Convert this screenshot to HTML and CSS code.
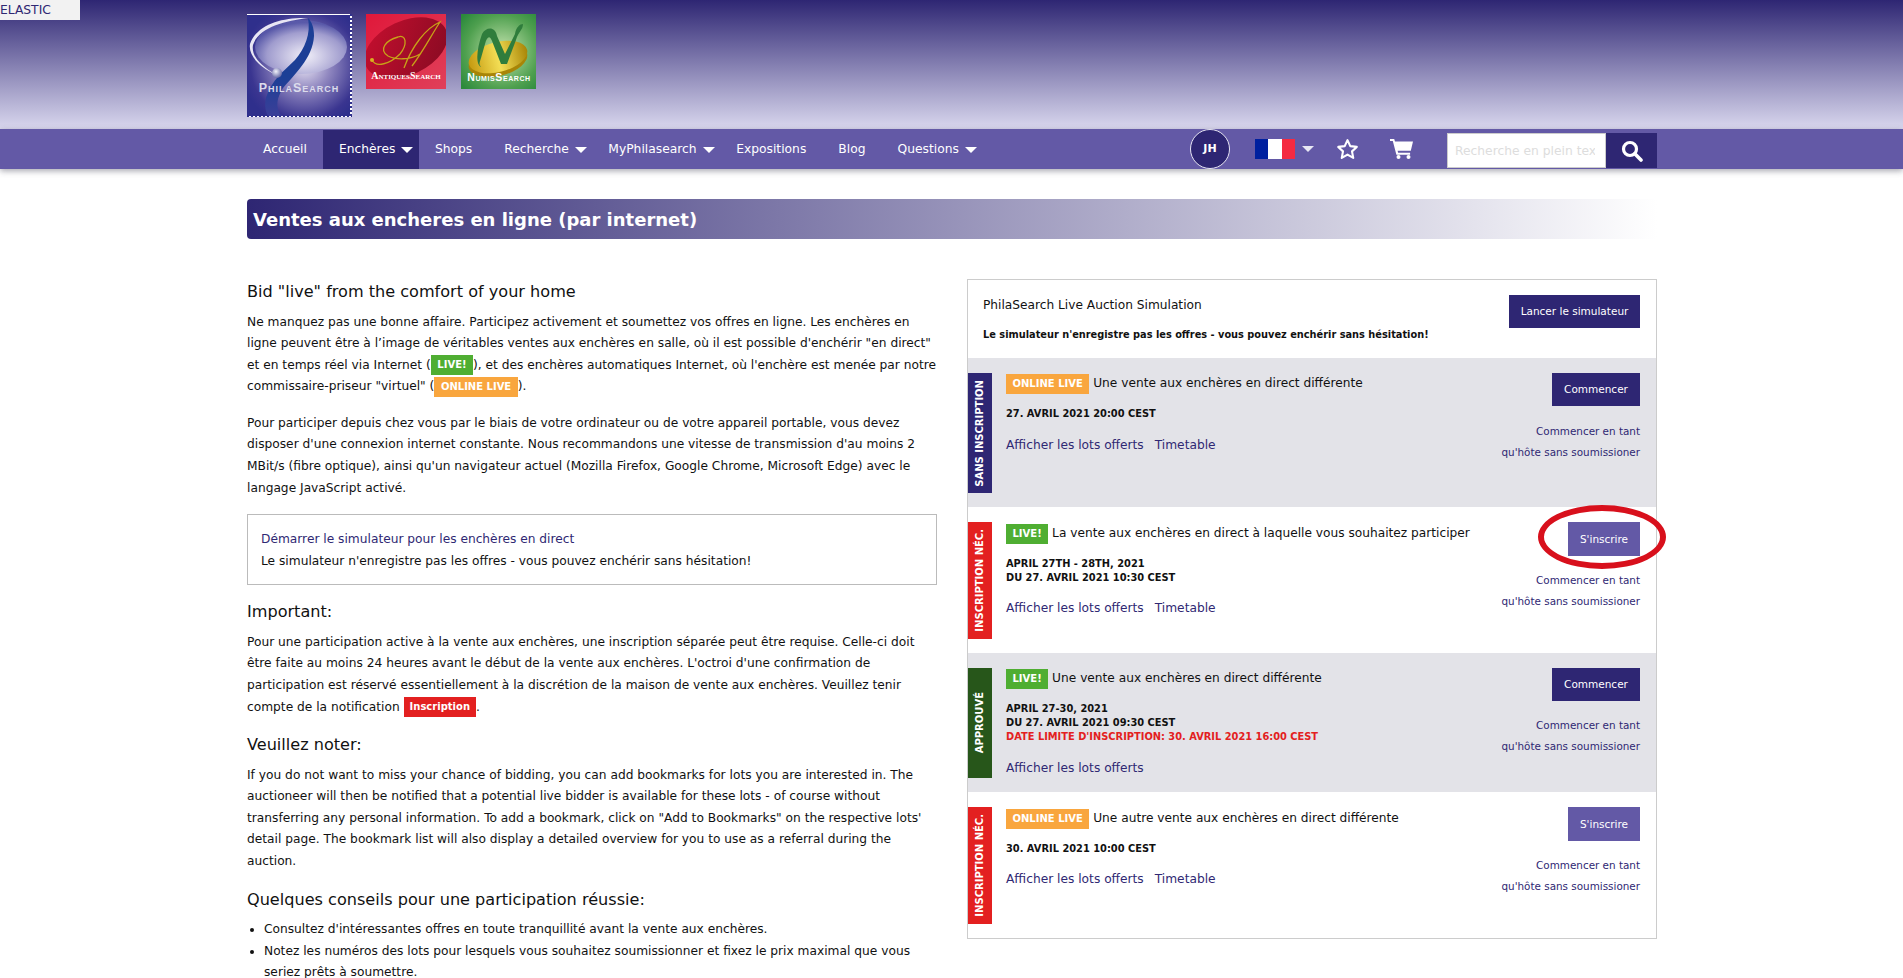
FILE: index.html
```html
<!DOCTYPE html>
<html lang="fr">
<head>
<meta charset="utf-8">
<title>Ventes aux encheres en ligne</title>
<link rel="stylesheet" href="styles.css">
</head>
<body>
<a class="elastic" href="#">ELASTIC</a>
<header class="masthead">
  <div class="wrap logos">
    <svg class="logo logo-phila" width="105" height="103" viewBox="0 0 105 103" role="img" aria-label="PhilaSearch">
      <defs>
        <radialGradient id="pg" cx="0.56" cy="0.5" r="0.62"><stop offset="0" stop-color="#e6e2f2"/><stop offset="0.4" stop-color="#8f86bf"/><stop offset="0.85" stop-color="#3a3590"/><stop offset="1" stop-color="#2f2f8c"/></radialGradient>
        <radialGradient id="lobe" cx="0.55" cy="0.65" r="0.6"><stop offset="0" stop-color="#f7f6fc"/><stop offset="0.7" stop-color="#a9a6d4"/><stop offset="1" stop-color="#5a5bab"/></radialGradient>
        <radialGradient id="ball" cx="0.4" cy="0.35" r="0.7"><stop offset="0" stop-color="#f2f2fa"/><stop offset="1" stop-color="#5a5d9e"/></radialGradient>
        <linearGradient id="rib" x1="0" y1="0" x2="0" y2="1"><stop offset="0" stop-color="#1c3f96"/><stop offset="0.6" stop-color="#1c3f96"/><stop offset="1" stop-color="#3b3f98"/></linearGradient>
      </defs>
      <rect width="105" height="103" fill="#fff"/>
      <rect x="0" y="1" width="103" height="101" fill="url(#pg)"/>
      <ellipse cx="54" cy="33" rx="46" ry="27" fill="url(#lobe)" opacity=".85"/>
      <path d="M61 4C36 3 10 10 3 30 1 42 14 54 28 60 14 52 4 42 6 31 12 13 38 7 61 4Z" fill="#e8e6f4"/>
      <path d="M61 4C64 20 58 34 48 46 38 56 24 66 19 84 17 92 19 98 21 102L34 102C28 92 30 84 36 74 46 62 66 44 67 22 67 14 65 8 61 4Z" fill="url(#rib)"/>
      <circle cx="30" cy="59" r="5" fill="url(#ball)"/>
      <text x="52" y="78" class="logo-text logo-text-phila" text-anchor="middle">PhilaSearch</text>
      <path d="M104 0V103" stroke="#2f2f8c" stroke-width="2" stroke-dasharray="2 2"/>
      <path d="M0 102.500H105" stroke="#2f2f8c" stroke-width="1.500" stroke-dasharray="2 2"/>
    </svg>
    <svg class="logo logo-antiques" width="80" height="75" viewBox="0 0 80 75" role="img" aria-label="AntiquesSearch">
      <defs>
        <linearGradient id="ag" x1="0" y1="0" x2="1" y2="1"><stop offset="0" stop-color="#e0183a"/><stop offset="1" stop-color="#e0405a"/></linearGradient>
        <linearGradient id="ae" x1="0" y1="0" x2="1" y2="0.600"><stop offset="0" stop-color="#c80f2f"/><stop offset="1" stop-color="#8f0b24"/></linearGradient>
      </defs>
      <rect width="80" height="75" fill="url(#ag)"/>
      <ellipse cx="40" cy="34" rx="44" ry="27" transform="rotate(-25 40 34)" fill="url(#ae)"/>
      <path d="M6 46C10 54 24 50 34 40 42 30 40 20 32 23 20 26 12 36 22 42 30 46 44 46 54 40M38 54C46 32 60 14 74 8 66 20 58 36 46 52" fill="none" stroke="#c8a118" stroke-width="1.300"/>
      <circle cx="6" cy="46" r="2" fill="#d9b020"/>
      <text x="40" y="65" class="logo-text logo-text-antiques" text-anchor="middle">AntiquesSearch</text>
    </svg>
    <svg class="logo logo-numis" width="75" height="75" viewBox="0 0 75 75" role="img" aria-label="NumisSearch">
      <defs>
        <radialGradient id="ng" cx="0.55" cy="0.5" r="0.7"><stop offset="0" stop-color="#c6e4b0"/><stop offset="0.7" stop-color="#4fa04f"/><stop offset="1" stop-color="#2c8a3c"/></radialGradient>
        <linearGradient id="gold" x1="0" y1="0" x2="1" y2="0"><stop offset="0" stop-color="#c59a10"/><stop offset="0.5" stop-color="#f3de55"/><stop offset="1" stop-color="#a88507"/></linearGradient>
      </defs>
      <rect width="75" height="75" fill="url(#ng)"/>
      <ellipse cx="37" cy="47" rx="30" ry="15" transform="rotate(-14 37 47)" fill="#a88507"/>
      <ellipse cx="37" cy="43" rx="30" ry="15" transform="rotate(-14 37 43)" fill="url(#gold)"/>
      <path d="M21 20C25 13 34 12 36 22L44 40 54 20C55 13 59 10 62 10 62 16 57 18 55 26L46 50 40 50 31 27C29 21 26 22 24 30L20 44C18 50 18 50 20 53 14 50 16 34 21 20Z" fill="#2f7d3c"/>
      <text x="38" y="67" class="logo-text logo-text-numis" text-anchor="middle">NumisSearch</text>
    </svg>
  </div>
</header>

<nav class="navbar">
  <div class="wrap nav-inner">
    <ul class="menu">
      <li><a href="#">Accueil</a></li>
      <li class="active caret"><a href="#">Enchères</a></li>
      <li><a href="#">Shops</a></li>
      <li class="caret"><a href="#">Recherche</a></li>
      <li class="caret"><a href="#">MyPhilasearch</a></li>
      <li><a href="#">Expositions</a></li>
      <li><a href="#">Blog</a></li>
      <li class="caret"><a href="#">Questions</a></li>
    </ul>
    <div class="nav-tools">
      <span class="avatar">JH</span>
      <span class="flag"><i class="fl-b"></i><i class="fl-w"></i><i class="fl-r"></i></span>
      <span class="flag-caret"></span>
      <svg class="tool-star" width="23" height="22" viewBox="0 0 24 23" aria-label="Favoris"><path d="M12 2.200l2.900 6.300 6.800.8-5 4.700 1.300 6.800-6-3.400-6 3.400 1.300-6.800-5-4.700 6.800-.8z" fill="none" stroke="#fff" stroke-width="2.200" stroke-linejoin="round"/></svg>
      <svg class="tool-cart" width="23" height="20" viewBox="0 0 23 20" aria-label="Panier"><path d="M0 0h4.200l.8 2.600H23l-2.200 9.200H7.600l.5 2h12v2H6.400L2.800 2H0z" fill="#fff"/><circle cx="8.500" cy="18" r="2" fill="#fff"/><circle cx="18.500" cy="18" r="2" fill="#fff"/></svg>
      <form class="search">
        <input class="search-input" type="text" placeholder="Recherche en plein texte">
        <button class="search-btn" type="button" aria-label="Rechercher"><svg width="22" height="22" viewBox="0 0 22 22"><circle cx="9" cy="9" r="6.500" fill="none" stroke="#fff" stroke-width="3.200"/><path d="M13.800 13.800L20 20" stroke="#fff" stroke-width="3.600" stroke-linecap="round"/></svg></button>
      </form>
    </div>
  </div>
</nav>

<main class="wrap page">
  <h1 class="page-title">Ventes aux encheres en ligne (par internet)</h1>
  <div class="columns">
    <section class="col-left">
      <h2>Bid "live" from the comfort of your home</h2>
      <p>Ne manquez pas une bonne affaire. Participez activement et soumettez vos offres en ligne. Les enchères en ligne peuvent être à l’image de véritables ventes aux enchères en salle, où il est possible d'enchérir "en direct" et en temps réel via Internet (<span class="badge live">LIVE!</span>), et des enchères automatiques Internet, où l'enchère est menée par notre commissaire-priseur "virtuel" (<span class="badge online">ONLINE LIVE</span>).</p>
      <p>Pour participer depuis chez vous par le biais de votre ordinateur ou de votre appareil portable, vous devez disposer d'une connexion internet constante. Nous recommandons une vitesse de transmission d'au moins 2 MBit/s (fibre optique), ainsi qu'un navigateur actuel (Mozilla Firefox, Google Chrome, Microsoft Edge) avec le langage JavaScript activé.</p>
      <div class="sim-box"><a href="#">Démarrer le simulateur pour les enchères en direct</a><br>Le simulateur n'enregistre pas les offres - vous pouvez enchérir sans hésitation!</div>
      <h2>Important:</h2>
      <p>Pour une participation active à la vente aux enchères, une inscription séparée peut être requise. Celle-ci doit être faite au moins 24 heures avant le début de la vente aux enchères. L'octroi d'une confirmation de participation est réservé essentiellement à la discrétion de la maison de vente aux enchères. Veuillez tenir compte de la notification <span class="badge reg">Inscription</span>.</p>
      <h2>Veuillez noter:</h2>
      <p>If you do not want to miss your chance of bidding, you can add bookmarks for lots you are interested in. The auctioneer will then be notified that a potential live bidder is available for these lots - of course without transferring any personal information. To add a bookmark, click on "Add to Bookmarks" on the respective lots' detail page. The bookmark list will also display a detailed overview for you to use as a referral during the auction.</p>
      <h2>Quelques conseils pour une participation réussie:</h2>
      <ul class="tips">
        <li>Consultez d'intéressantes offres en toute tranquillité avant la vente aux enchères.</li>
        <li>Notez les numéros des lots pour lesquels vous souhaitez soumissionner et fixez le prix maximal que vous seriez prêts à soumettre.</li>
      </ul>
    </section>

    <aside class="panel">
      <div class="panel-head">
        <div class="panel-head-text">
          <div class="panel-title">PhilaSearch Live Auction Simulation</div>
          <div class="panel-note">Le simulateur n'enregistre pas les offres - vous pouvez enchérir sans hésitation!</div>
        </div>
        <a class="btn btn-dark" href="#">Lancer le simulateur</a>
      </div>

      <article class="row row-grey row-a">
        <div class="tag tag-navy"><span>SANS INSCRIPTION</span></div>
        <div class="row-main">
          <div class="row-title"><span class="badge online">ONLINE LIVE</span> Une vente aux enchères en direct différente</div>
          <div class="row-date">27. AVRIL 2021 20:00 CEST</div>
          <div class="row-links"><a href="#">Afficher les lots offerts</a><a href="#">Timetable</a></div>
        </div>
        <div class="row-side">
          <a class="btn btn-dark btn-start" href="#">Commencer</a>
          <a class="guest" href="#">Commencer en tant<br>qu'hôte sans soumissioner</a>
        </div>
      </article>

      <article class="row row-b">
        <div class="tag tag-red"><span>INSCRIPTION NÉC.</span></div>
        <div class="row-main">
          <div class="row-title"><span class="badge live">LIVE!</span> La vente aux enchères en direct à laquelle vous souhaitez participer</div>
          <div class="row-date">APRIL 27TH - 28TH, 2021<br>DU 27. AVRIL 2021 10:30 CEST</div>
          <div class="row-links"><a href="#">Afficher les lots offerts</a><a href="#">Timetable</a></div>
        </div>
        <div class="row-side">
          <a class="btn btn-violet" href="#">S'inscrire</a>
          <a class="guest" href="#">Commencer en tant<br>qu'hôte sans soumissioner</a>
          <span class="circle-mark"></span>
        </div>
      </article>

      <article class="row row-grey row-c">
        <div class="tag tag-green"><span>APPROUVÉ</span></div>
        <div class="row-main">
          <div class="row-title"><span class="badge live">LIVE!</span> Une vente aux enchères en direct différente</div>
          <div class="row-date">APRIL 27-30, 2021<br>DU 27. AVRIL 2021 09:30 CEST<br><span class="deadline">DATE LIMITE D'INSCRIPTION: 30. AVRIL 2021 16:00 CEST</span></div>
          <div class="row-links"><a href="#">Afficher les lots offerts</a></div>
        </div>
        <div class="row-side">
          <a class="btn btn-dark btn-start" href="#">Commencer</a>
          <a class="guest" href="#">Commencer en tant<br>qu'hôte sans soumissioner</a>
        </div>
      </article>

      <article class="row row-b">
        <div class="tag tag-red"><span>INSCRIPTION NÉC.</span></div>
        <div class="row-main">
          <div class="row-title"><span class="badge online">ONLINE LIVE</span> Une autre vente aux enchères en direct différente</div>
          <div class="row-date">30. AVRIL 2021 10:00 CEST</div>
          <div class="row-links"><a href="#">Afficher les lots offerts</a><a href="#">Timetable</a></div>
        </div>
        <div class="row-side">
          <a class="btn btn-violet" href="#">S'inscrire</a>
          <a class="guest" href="#">Commencer en tant<br>qu'hôte sans soumissioner</a>
        </div>
      </article>
    </aside>
  </div>
</main>
</body>
</html>
```
FILE: styles.css
```css
* { box-sizing: border-box; }
html, body { height: 978px; overflow: hidden; }
body { margin: 0; background: #fff; color: #111; font: 12.23px/21.6px "DejaVu Sans", sans-serif; }
a { color: #2f2873; text-decoration: none; }
.wrap { width: 1410px; margin-left: 247px; }

.elastic { position: absolute; left: 0; top: 0; width: 80px; height: 20px; background: #f2f2f2; color: #2f2873; font-size: 12.3px; line-height: 20px; }

.masthead { height: 129px; background: linear-gradient(#2e2673 0%, #d9d7ee 100%); padding-top: 14px; }
.logos { display: flex; align-items: flex-start; }
.logo { display: block; }
.logo-antiques { margin-left: 14px; }
.logo-numis { margin-left: 15px; }
.logo-text { font-family: "Liberation Serif", serif; font-weight: 700; fill: #fff; font-variant: small-caps; }
.logo-text-phila { font-family: "Liberation Sans", sans-serif; font-size: 12.5px; letter-spacing: 1px; fill: #dcdcec; }
.logo-text-antiques { font-size: 10px; }
.logo-text-numis { font-family: "Liberation Sans", sans-serif; font-size: 10.5px; letter-spacing: .6px; }

.navbar { height: 40px; background: #6359a6; box-shadow: 0 2px 6px rgba(60, 60, 80, .45); position: relative; }
.nav-inner { display: flex; justify-content: space-between; height: 40px; }
.menu { display: flex; list-style: none; margin: 0; padding: 0; }
.menu li { display: flex; align-items: center; height: 39px; margin-top: 1px; padding: 0 16px; }
.menu a { color: #fff; font-size: 12.3px; }
.menu .active { background: #2e2673; }
.menu .caret { padding-right: 0; }
.menu .caret::after { content: ""; margin-left: 6px; margin-right: 5.5px; border: 6px solid transparent; border-top-color: #fff; border-bottom-width: 0; }
.nav-tools { display: flex; align-items: center; }
.avatar { width: 40px; height: 40px; border-radius: 50%; border: 1px solid #e6e4f2; background: #2e2673; color: #fff; font-weight: 700; font-size: 11px; display: flex; align-items: center; justify-content: center; }
.flag { display: flex; width: 40px; height: 20px; margin-left: 25px; }
.flag i { flex: 1; }
.fl-b { background: #00209f; }
.fl-w { background: #fff; }
.fl-r { background: #f42a41; }
.flag-caret { margin-left: 7px; border: 6px solid transparent; border-top-color: #e8e8f4; border-bottom-width: 0; }
.tool-star { margin-left: 22px; }
.tool-cart { margin-left: 31px; }
.search { display: flex; margin: 3px 0 0 34px; height: 35px; }
.search-input { width: 159px; height: 35px; border: 1px solid #ccc; padding: 0 10px 0 7px; font: 12.3px "DejaVu Sans", sans-serif; background: #fff; }
.search-input::placeholder { color: #ddd; opacity: 1; }
.search-btn { width: 51px; height: 35px; border: 0; padding: 0; background: #2e2673; display: flex; align-items: center; justify-content: center; }

.page-title { height: 40px; margin: 30px 0 0; padding: 0 6px; border-radius: 4px 0 0 4px; background: linear-gradient(90deg, #2e2673 0%, #fff 100%); color: #fff; font-size: 18px; font-weight: 700; line-height: 41px; }

.columns { display: flex; justify-content: space-between; align-items: flex-start; margin-top: 40px; }
.col-left { width: 690px; padding-top: 1px; }
.col-left p { margin: 0 0 15px; }
.col-left h2 { margin: 0 0 7.500px; font-size: 16.100px; font-weight: 400; line-height: 24px; color: #111; }
.badge { display: inline-block; vertical-align: middle; height: 20px; padding: 0 6.5px; color: #fff; font-size: 10px; font-weight: 700; line-height: 20px; }
.col-left .badge { margin: -3px 0; }
.col-left .reg { padding: 0 6px; }
.live { background: #4fae32; }
.online { background: #f9a63e; }
.reg { background: #e32020; }
.sim-box { height: 71px; margin: 13px 0 15px; padding: 14px 13px; border: 1px solid #bbb; }
.tips { margin: 0; padding: 0 0 0 17px; }

.panel { width: 690px; height: 660px; border: 1px solid #ccc; }
.panel-head { display: flex; justify-content: space-between; height: 78px; padding: 15px 16px 0 15px; }
.panel-title { font-size: 12.2px; }
.panel-note { margin-top: 7px; font-size: 9.800px; font-weight: 700; }
.btn { display: block; height: 33px; padding: 0; color: #fff; font-size: 10.5px; line-height: 33px; text-align: center; }
.panel-head .btn { width: 131px; }
.btn-dark { background: #2e2673; }
.btn-violet { background: #6359a6; width: 72px; height: 34px; line-height: 34px; }
.btn-start { width: 88px; }

.row { position: relative; display: flex; padding: 15px 16px 14px 0; }
.row-grey { background: #e3e3e8; }
.row-a { height: 149px; }
.row-b { height: 146px; }
.row-c { height: 139px; }
.tag { width: 24px; flex: none; display: flex; align-items: center; justify-content: center; color: #fff; font-size: 10px; font-weight: 700; }
.tag span { writing-mode: vertical-rl; transform: rotate(180deg); white-space: nowrap; }
.tag-navy { background: #2e2673; }
.tag-red { background: #e32020; }
.tag-green { background: #27561a; }
.row-main { flex: 1; padding-left: 14px; }
.row-b .row-main { padding-top: 1px; }
.row-title { font-size: 12.2px; line-height: 21px; }
.row-date { margin-top: 13px; font-size: 9.850px; font-weight: 700; line-height: 14px; }
.deadline { color: #e32020; }
.row-links { margin-top: 14px; }
.row-b .row-links { margin-top: 13px; }
.row-links a { margin-right: 11px; }
.row-side { position: relative; display: flex; flex-direction: column; align-items: flex-end; }
.guest { margin-top: 14px; font-size: 10.4px; line-height: 20.500px; text-align: right; }
.row-a .guest { margin-top: 15px; }
.circle-mark { position: absolute; right: -26px; top: -17px; width: 128px; height: 64px; border: 6px solid #d8101c; border-radius: 50%; }
```
